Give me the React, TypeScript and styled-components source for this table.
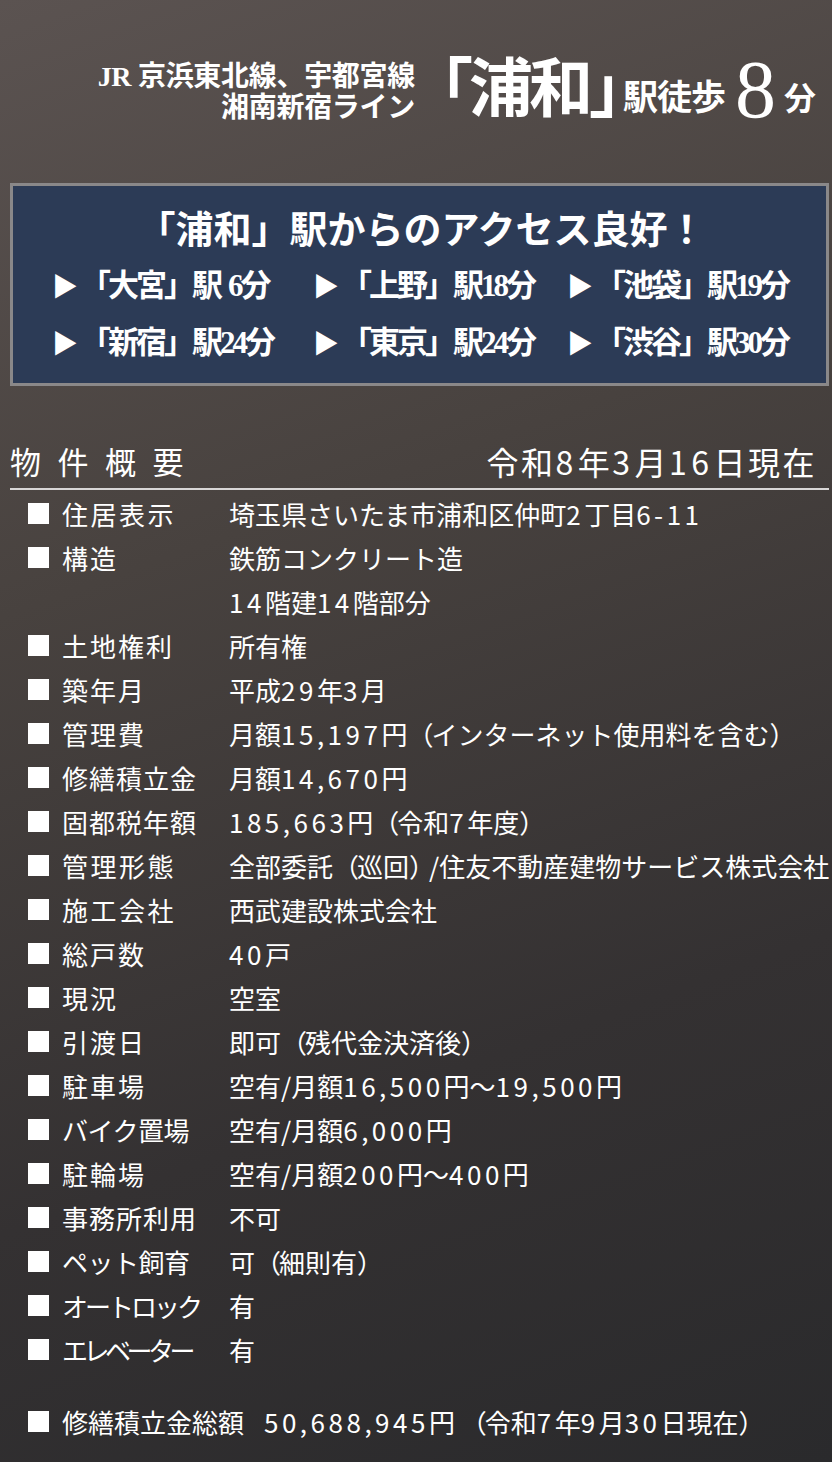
import React from "react";
import styled, { createGlobalStyle } from "styled-components";

const Global = createGlobalStyle`
  html, body { margin: 0; padding: 0; }
  body {
    width: 832px;
    min-height: 1462px;
    background: linear-gradient(160deg, #5b5351 0%, #48423f 35%, #343132 70%, #2a2a2c 100%);
    color: #fff;
    font-family: "Noto Sans CJK JP", "Noto Sans", sans-serif;
  }
`;

const Page = styled.div`
  width: 832px;
  height: 1462px;
  overflow: hidden;
  display: flex;
  flex-direction: column;
`;

const Header = styled.header`
  display: flex;
  justify-content: flex-end;
  align-items: flex-end;
  padding: 44px 16px 0 0;
  height: 80px;
  font-family: "Liberation Serif", "Noto Sans CJK JP", serif;
`;

const Lines = styled.div`
  display: flex;
  flex-direction: column;
  align-items: flex-end;
  font-size: 28px;
  line-height: 31px;
  font-weight: 700;
  letter-spacing: -0.3px;
  margin-bottom: 1px;
`;

const Station = styled.div`
  font-size: 64px;
  line-height: 74px;
  font-weight: 700;
  letter-spacing: -4px;
  margin: 0 0 -3px -6px;
`;

const CloseBracket = styled.span`
  letter-spacing: -30px;
`;

const Walk = styled.div`
  font-size: 35px;
  line-height: 40px;
  font-weight: 700;
  letter-spacing: -1px;
  margin-bottom: 5px;
`;

const Minutes = styled.div`
  font-size: 82px;
  line-height: 74px;
  font-weight: 400;
  margin: 0 8px -3px 10px;
`;

const Unit = styled.div`
  font-size: 32px;
  line-height: 40px;
  font-weight: 700;
  margin-bottom: 5px;
`;

const AccessBox = styled.section`
  margin: 59px 3px 0 10px;
  height: 197px;
  border: 3px solid #8a8889;
  background: #2c3b56;
  display: flex;
  flex-direction: column;
  font-family: "Liberation Serif", "Noto Sans CJK JP", serif;
`;

const AccessTitle = styled.div`
  text-align: center;
  font-size: 38px;
  line-height: 42px;
  font-weight: 700;
  margin-top: 23px;
  padding-left: 4px;
`;

const AccessGrid = styled.div`
  display: grid;
  grid-template-columns: 261px 254px auto;
  row-gap: 15px;
  padding-left: 39px;
  margin-top: 15px;
`;

const AccessItem = styled.div`
  font-size: 31px;
  line-height: 40px;
  font-weight: 700;
  letter-spacing: -3px;
  white-space: nowrap;
`;

const Arrow = styled.span`
  display: inline-block;
  font-size: 26px;
  letter-spacing: 0;
  margin-right: 2px;
`;

const Gap = styled.span`
  display: inline-block;
  width: 8px;
`;

const SummaryHead = styled.div`
  margin: 52px 3px 0 10px;
  display: flex;
  justify-content: space-between;
  align-items: center;
  border-bottom: 2px solid #d8d6d6;
  height: 46px;
  padding-bottom: 4px;
`;

const HeadTitle = styled.div`
  font-size: 31px;
  line-height: 40px;
  letter-spacing: 16.5px;
`;

const HeadDate = styled.div`
  font-size: 32px;
  line-height: 40px;
  letter-spacing: 2.5px;
  margin-right: 12px;
`;

const Num = styled.span<{ $extra?: number }>`
  letter-spacing: ${(p) => p.$extra ?? 3.5}px;
`;

const Paren = styled.span<{ $open?: boolean }>`
  letter-spacing: ${(p) => (p.$open ? -2 : -6)}px;
`;

const List = styled.div`
  display: flex;
  flex-direction: column;
  padding-top: 1px;
`;

const Row = styled.div<{ $gapTop?: number }>`
  display: flex;
  align-items: center;
  height: 44px;
  padding-left: 28px;
  margin-top: ${(p) => p.$gapTop ?? 0}px;
  font-size: 26px;
  white-space: nowrap;
`;

const Bullet = styled.span<{ $hidden?: boolean }>`
  width: 21px;
  height: 21px;
  background: ${(p) => (p.$hidden ? "transparent" : "#fff")};
  margin-right: 13px;
  flex: none;
`;

const Label = styled.span<{ $width?: number; $spacing?: number }>`
  width: ${(p) => p.$width ?? 167}px;
  flex: none;
  letter-spacing: ${(p) => p.$spacing ?? 2}px;
`;

const Value = styled.span`
  letter-spacing: 0;
`;

const withNums = (text: string, extra?: number) =>
  text.split(/([0-9][0-9,\-]*|[（）])/).map((part, i) => {
    if (/^[0-9]/.test(part))
      return (
        <Num key={i} $extra={extra}>
          {part}
        </Num>
      );
    if (part === "（" || part === "）")
      return (
        <Paren key={i} $open={part === "（"}>
          {part}
        </Paren>
      );
    return <React.Fragment key={i}>{part}</React.Fragment>;
  });

type Item = { label: string; value: string; spacing?: number };

const rows: Item[] = [
  { label: "住居表示", value: "埼玉県さいたま市浦和区仲町2丁目6-11", spacing: 2.5 },
  { label: "構造", value: "鉄筋コンクリート造" },
  { label: "", value: "14階建14階部分" },
  { label: "土地権利", value: "所有権" },
  { label: "築年月", value: "平成29年3月" },
  { label: "管理費", value: "月額15,197円（インターネット使用料を含む）" },
  { label: "修繕積立金", value: "月額14,670円", spacing: 1 },
  { label: "固都税年額", value: "185,663円（令和7年度）", spacing: 1 },
  { label: "管理形態", value: "全部委託（巡回）/住友不動産建物サービス株式会社", spacing: 2.5 },
  { label: "施工会社", value: "西武建設株式会社", spacing: 2.5 },
  { label: "総戸数", value: "40戸" },
  { label: "現況", value: "空室" },
  { label: "引渡日", value: "即可（残代金決済後）" },
  { label: "駐車場", value: "空有/月額16,500円～19,500円" },
  { label: "バイク置場", value: "空有/月額6,000円", spacing: -0.5 },
  { label: "駐輪場", value: "空有/月額200円～400円" },
  { label: "事務所利用", value: "不可", spacing: 1 },
  { label: "ペット飼育", value: "可（細則有）", spacing: -0.5 },
  { label: "オートロック", value: "有", spacing: -3 },
  { label: "エレベーター", value: "有", spacing: -4.5 },
];

const access = [
  ["大宮", "6分", true],
  ["上野", "18分", false],
  ["池袋", "19分", false],
  ["新宿", "24分", false],
  ["東京", "24分", false],
  ["渋谷", "30分", false],
] as const;

export default function App() {
  return (
    <>
      <Global />
      <Page>
        <Header>
          <Lines>
            <span>JR 京浜東北線、宇都宮線</span>
            <span>湘南新宿ライン</span>
          </Lines>
          <Station>
            「浦和<CloseBracket>」</CloseBracket>
          </Station>
          <Walk>駅徒歩</Walk>
          <Minutes>8</Minutes>
          <Unit>分</Unit>
        </Header>

        <AccessBox>
          <AccessTitle>「浦和」駅からのアクセス良好！</AccessTitle>
          <AccessGrid>
            {access.map(([name, min, spaced]) => (
              <AccessItem key={name}>
                <Arrow>▶</Arrow>「{name}」駅{spaced && <Gap />}
                {min}
              </AccessItem>
            ))}
          </AccessGrid>
        </AccessBox>

        <SummaryHead>
          <HeadTitle>物件概要</HeadTitle>
          <HeadDate>{withNums("令和8年3月16日現在", 4.5)}</HeadDate>
        </SummaryHead>

        <List>
          {rows.map((r, i) => (
            <Row key={i}>
              <Bullet $hidden={!r.label} />
              <Label $spacing={r.spacing}>{r.label}</Label>
              <Value>{withNums(r.value)}</Value>
            </Row>
          ))}
          <Row $gapTop={28}>
            <Bullet />
            <Label $width={202} $spacing={0}>
              修繕積立金総額
            </Label>
            <Value>{withNums("50,688,945円 （令和7年9月30日現在）")}</Value>
          </Row>
        </List>
      </Page>
    </>
  );
}
